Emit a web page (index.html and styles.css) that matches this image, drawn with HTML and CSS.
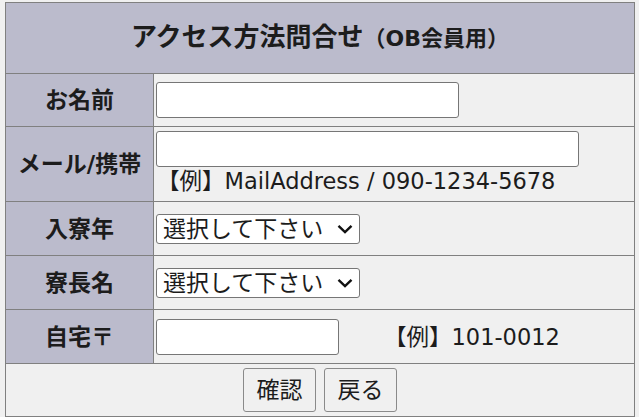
FILE: index.html
```html
<!DOCTYPE html>
<html lang="ja">
<head>
<meta charset="utf-8">
<title>アクセス方法問合せ</title>
<link rel="stylesheet" href="styles.css">
</head>
<body>
<form class="page">
<table class="form">
  <tr class="row-title">
    <th colspan="2" class="title">アクセス方法問合せ<span class="sub">（OB会員用）</span></th>
  </tr>
  <tr class="row-name">
    <th class="label">お名前</th>
    <td class="field"><input class="in in-name" type="text"></td>
  </tr>
  <tr class="row-mail">
    <th class="label">メール/携帯</th>
    <td class="field"><input class="in in-mail" type="text"><div class="hint">【例】MailAddress / 090-1234-5678</div></td>
  </tr>
  <tr class="row-sel">
    <th class="label">入寮年</th>
    <td class="field"><select class="sel"><option>選択して下さい</option></select></td>
  </tr>
  <tr class="row-sel">
    <th class="label">寮長名</th>
    <td class="field"><select class="sel"><option>選択して下さい</option></select></td>
  </tr>
  <tr class="row-zip">
    <th class="label">自宅〒</th>
    <td class="field"><input class="in in-zip" type="text"><span class="zip-hint">【例】101-0012</span></td>
  </tr>
  <tr class="row-actions">
    <td colspan="2" class="actions"><button type="button" class="btn">確認</button><button type="button" class="btn">戻る</button></td>
  </tr>
</table>
</form>
</body>
</html>
```

FILE: styles.css
```css
html, body {
  margin: 0;
  padding: 0;
  background: #f0f0f0;
}
body {
  font-family: "DejaVu Sans", "Noto Sans CJK JP", sans-serif;
  color: #1c1c1c;
  line-height: 1.25;
}
.page {
  padding: 2px 0 0 5px;
}
.form {
  border-collapse: collapse;
  width: 630px;
  border: 1px solid #808080;
}
.form th, .form td {
  border: 1px solid #808080;
  padding: 0;
}
.title {
  background: #bbbbcc;
  height: 70px;
  font-size: 26px;
  line-height: 32px;
  font-weight: bold;
  text-align: center;
  vertical-align: middle;
}
.sub {
  font-size: 22px;
}
.label {
  background: #bbbbcc;
  width: 147px;
  font-size: 23px;
  line-height: 28px;
  font-weight: bold;
  text-align: center;
}
.field {
  padding-left: 2px !important;
  vertical-align: middle;
}
.row-name { height: 53px; }
.row-mail { height: 75px; }
.row-sel { height: 54px; }
.row-zip { height: 54px; }
.row-actions { height: 53px; }
.in {
  box-sizing: border-box;
  height: 36px;
  border: 1px solid #767676;
  border-radius: 3px;
  background: #fff;
  margin: 0;
  display: block;
  font-family: inherit;
  font-size: 20px;
}
.in-name { width: 303px; }
.in-mail { width: 423px; }
.in-zip { width: 183px; display: inline-block; vertical-align: middle; }
.hint {
  font-size: 22.5px;
  line-height: 28px;
  padding-left: 1px;
  margin-bottom: 2px;
}
.zip-hint {
  font-size: 22.5px;
  line-height: 28px;
  margin-left: 45px;
  vertical-align: middle;
}
.sel {
  -webkit-appearance: none;
  appearance: none;
  box-sizing: border-box;
  width: 204px;
  height: 30px;
  border: 1px solid #767676;
  border-radius: 3px;
  background: #fff url("data:image/svg+xml;utf8,<svg xmlns='http://www.w3.org/2000/svg' width='16' height='10' viewBox='0 0 16 10'><path d='M1.5 1.8 L8 8 L14.5 1.8' fill='none' stroke='%23111' stroke-width='2.4'/></svg>") no-repeat right 6px center;
  font-family: inherit;
  font-size: 23px;
  color: #1c1c1c;
  padding: 0 0 0 6px;
  margin: 0;
  line-height: 28px;
  display: block;
}
.actions {
  text-align: center;
  vertical-align: middle;
}
.btn {
  box-sizing: border-box;
  width: 73px;
  height: 44px;
  margin: 0 4px;
  border: 1px solid #8a8a8a;
  border-radius: 3px;
  background: #f0f0f0;
  font-family: inherit;
  font-size: 23px;
  line-height: 28px;
  color: #1c1c1c;
  padding: 0;
}
```
